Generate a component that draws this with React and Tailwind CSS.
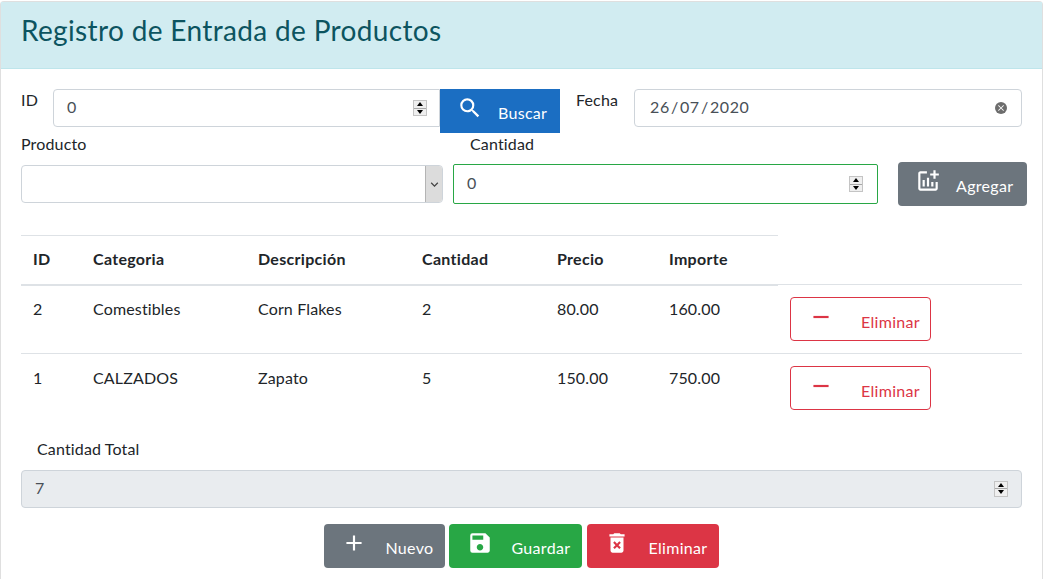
import { MdSearch, MdAddchart, MdRemove, MdAdd, MdSave, MdDeleteForever, MdClose, MdKeyboardArrowDown } from 'react-icons/md';

const rows = [
  { id: 2, categoria: 'Comestibles', descripcion: 'Corn Flakes', cantidad: 2, precio: '80.00', importe: '160.00' },
  { id: 1, categoria: 'CALZADOS', descripcion: 'Zapato', cantidad: 5, precio: '150.00', importe: '750.00' },
];

function Spinner() {
  return (
    <div className="flex w-[14px] h-[16px] flex-col bg-[#efefef] border border-[#c4c4c4] shrink-0">
      <div className="flex flex-1 items-center justify-center border-b border-[#a8a8a8]">
        <div className="w-0 h-0 border-x-[3px] border-x-transparent border-b-[4px] border-b-black" />
      </div>
      <div className="flex flex-1 items-center justify-center">
        <div className="w-0 h-0 border-x-[3px] border-x-transparent border-t-[4px] border-t-black" />
      </div>
    </div>
  );
}

function NumberBox({ value, className }) {
  return (
    <div className={`flex items-center pl-[13px] ${className}`}>
      <span className="flex-1 pb-[2px] text-[#495057]">{value}</span>
      <Spinner />
    </div>
  );
}

function ActionButton({ icon: Icon, label, className, iconSize = 26, gap }) {
  return (
    <button className={`flex items-start rounded-[4px] h-[44px] ${className}`}>
      <Icon size={iconSize} className="mt-[6px] shrink-0" />
      <span className={`mt-[13px] text-[16px] leading-[22px] tracking-[0.3px] ${gap}`}>{label}</span>
    </button>
  );
}

export default function App() {
  return (
    <div className="h-[579px] w-[1043px] overflow-hidden bg-white pt-[1px] font-['Lato','Liberation_Sans',sans-serif] text-[16px] tracking-[0.15px] text-[#212529]">
      <div className="h-[578px] border-x border-t-[1px] border-[#dfdfdf] rounded-t-[4px]">
        <div className="flex h-[67px] items-start bg-[#d1ecf1] border-b border-[#bee5eb] pl-[20px] pt-[10px]">
          <h1 className="text-[28px] leading-[36px] tracking-[0.35px] text-[#0c5460]">Registro de Entrada de Productos</h1>
        </div>

        <div className="flex mt-[20px] pl-[20px] h-[44px]">
          <label className="w-[32px] leading-[22px]">ID</label>
          <NumberBox value="0" className="w-[387px] h-[38px] border border-[#ced4da] rounded-l-[4px] pr-[12px]" />
          <ActionButton icon={MdSearch} label="Buscar" gap="ml-[15px]" className="w-[120px] bg-[#1b6ec2] text-white pl-[17px] rounded-none" />
          <label className="ml-[16px] w-[58px] leading-[22px]">Fecha</label>
          <div className="flex items-center w-[388px] h-[38px] border border-[#ced4da] rounded-[4px] pl-[15px] pr-[14px] text-[#495057]">
            <span className="flex-1 pb-[2px] tracking-[0.6px] [word-spacing:-3.5px]">26 / 07 / 2020</span>
            <span className="flex w-[12px] h-[12px] items-center justify-center rounded-full bg-[#6d6d6d] text-white">
              <MdClose size={10} />
            </span>
          </div>
        </div>

        <div className="flex pl-[20px] h-[29px] leading-[22px]">
          <label className="w-[449px]">Producto</label>
          <label>Cantidad</label>
        </div>

        <div className="flex items-center pl-[20px] h-[44px]">
          <div className="flex w-[422px] h-[38px] justify-end border border-[#ced4da] rounded-[4px] overflow-hidden">
            <span className="flex w-[17px] items-center justify-center bg-[#dcdcdc] border-l border-[#b4b4b4] text-[#444]">
              <MdKeyboardArrowDown size={15} />
            </span>
          </div>
          <NumberBox value="0" className="ml-[10px] w-[425px] h-[40px] border border-[#28a745] rounded-[2px] pr-[14px]" />
          <ActionButton icon={MdAddchart} label="Agregar" gap="ml-[15px]" className="ml-[20px] w-[129px] bg-[#6c757d] text-white pl-[17px]" />
        </div>

        <table className="ml-[20px] mt-[29px] w-[1001px] table-fixed border-collapse text-left">
          <colgroup>
            <col className="w-[60px]" />
            <col className="w-[165px]" />
            <col className="w-[164px]" />
            <col className="w-[135px]" />
            <col className="w-[112px]" />
            <col className="w-[121px]" />
            <col className="w-[244px]" />
          </colgroup>
          <thead>
            <tr className="h-[49px]">
              {['ID', 'Categoria', 'Descripción', 'Cantidad', 'Precio', 'Importe'].map((h) => (
                <th key={h} className="border-t border-b-2 border-[#dee2e6] px-[12px] pb-[2px] font-bold tracking-[0.3px]">{h}</th>
              ))}
            </tr>
          </thead>
          <tbody>
            {rows.map((r, i) => {
              const cell = i === 0 ? 'align-top border-b border-[#dee2e6] px-[12px] pt-[11px]' : 'align-top px-[12px] pt-[12px]';
              return (
                <tr key={r.id} className={i === 0 ? 'h-[69px]' : 'h-[68px]'}>
                  <td className={cell}>{r.id}</td>
                  <td className={cell}>{r.categoria}</td>
                  <td className={cell}>{r.descripcion}</td>
                  <td className={cell}>{r.cantidad}</td>
                  <td className={cell}>{r.precio}</td>
                  <td className={cell}>{r.importe}</td>
                  <td className={`align-top border-[#dee2e6] px-[12px] pt-[12px] ${i === 0 ? 'border-y' : ''}`}>
                    <ActionButton
                      icon={MdRemove}
                      label="Eliminar"
                      gap="ml-[27px]"
                      className="w-[141px] border border-[#dc3545] text-[#dc3545] pl-[17px]"
                    />
                  </td>
                </tr>
              );
            })}
          </tbody>
        </table>

        <div className="pl-[36px] mt-[16px] leading-[22px]">Cantidad Total</div>
        <NumberBox value="7" className="ml-[20px] mt-[10px] w-[1001px] h-[38px] border border-[#ced4da] rounded-[4px] bg-[#e9ecef] pr-[13px]" />

        <div className="flex justify-center mt-[16px] gap-[4px] pr-[1px]">
          <ActionButton icon={MdAdd} label="Nuevo" gap="ml-[19px]" className="w-[121px] bg-[#6c757d] text-white pl-[17px]" />
          <ActionButton icon={MdSave} label="Guardar" gap="ml-[19px]" className="w-[133px] bg-[#28a745] text-white pl-[18px]" />
          <ActionButton icon={MdDeleteForever} label="Eliminar" gap="ml-[19px]" className="w-[132px] bg-[#dc3545] text-white pl-[17px] ml-[1px]" />
        </div>
      </div>
    </div>
  );
}
